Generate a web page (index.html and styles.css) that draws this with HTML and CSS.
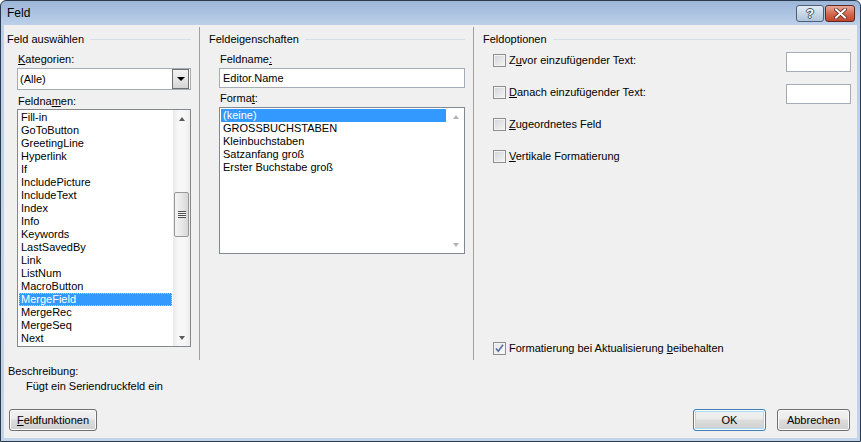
FILE: index.html
```html
<!DOCTYPE html>
<html lang="de">

<head>
    <meta charset="UTF-8">
    <title>Feld</title>
    <link rel="stylesheet" href="styles.css">
</head>

<body>
    <div class="window">
        <div class="titlebar">
            <span class="title">Feld</span>
            <div class="caption-buttons">
                <div class="cap cap-help">?</div>
                <div class="cap cap-close">
                    <svg width="13" height="11" viewBox="0 0 13 11">
                        <path d="M2 1.5 L11 9.5 M11 1.5 L2 9.5" stroke="#5b2a20" stroke-width="3.6" stroke-linecap="square" />
                        <path d="M2 1.5 L11 9.5 M11 1.5 L2 9.5" stroke="#fff" stroke-width="2" stroke-linecap="square" />
                    </svg>
                </div>
            </div>
        </div>

        <div class="client">
            <div class="panes">
                <!-- Feld auswählen -->
                <section class="pane pane-select">
                    <div class="group-title">Feld auswählen</div>
                    <div class="pane-body">
                        <span class="label"><u>K</u>ategorien:</span>
                        <div class="combo">
                            <span class="combo-text">(Alle)</span>
                            <span class="combo-btn"><i class="tri-down"></i></span>
                        </div>
                        <span class="label label-gap">Feldna<u>m</u>en:</span>
                        <div class="listbox list-names">
                            <div class="items">
                                <div class="item">Fill-in</div>
                                <div class="item">GoToButton</div>
                                <div class="item">GreetingLine</div>
                                <div class="item">Hyperlink</div>
                                <div class="item">If</div>
                                <div class="item">IncludePicture</div>
                                <div class="item">IncludeText</div>
                                <div class="item">Index</div>
                                <div class="item">Info</div>
                                <div class="item">Keywords</div>
                                <div class="item">LastSavedBy</div>
                                <div class="item">Link</div>
                                <div class="item">ListNum</div>
                                <div class="item">MacroButton</div>
                                <div class="item selected focused">MergeField</div>
                                <div class="item">MergeRec</div>
                                <div class="item">MergeSeq</div>
                                <div class="item">Next</div>
                            </div>
                            <div class="scrollbar">
                                <div class="sb-arrow"><i class="tri-up"></i></div>
                                <div class="sb-track">
                                    <div class="sb-thumb"><i class="grip"></i></div>
                                </div>
                                <div class="sb-arrow"><i class="tri-down small"></i></div>
                            </div>
                        </div>
                    </div>
                </section>

                <!-- Feldeigenschaften -->
                <section class="pane pane-props">
                    <div class="group-title">Feldeigenschaften</div>
                    <div class="pane-body">
                        <span class="label">Feldname<u>:</u></span>
                        <div class="textbox">Editor.Name</div>
                        <span class="label label-format">Forma<u>t</u>:</span>
                        <div class="listbox list-format">
                            <div class="items">
                                <div class="item selected">(keine)</div>
                                <div class="item">GROSSBUCHSTABEN</div>
                                <div class="item">Kleinbuchstaben</div>
                                <div class="item">Satzanfang groß</div>
                                <div class="item">Erster Buchstabe groß</div>
                            </div>
                            <div class="scrollbar disabled">
                                <div class="sb-arrow"><i class="tri-up"></i></div>
                                <div class="sb-track"></div>
                                <div class="sb-arrow"><i class="tri-down small"></i></div>
                            </div>
                        </div>
                    </div>
                </section>

                <!-- Feldoptionen -->
                <section class="pane pane-options">
                    <div class="group-title">Feldoptionen</div>
                    <div class="options">
                        <div class="option">
                            <label class="check-label"><span class="checkbox"></span><span>Z<u>u</u>vor einzufügender Text:</span></label>
                            <div class="option-input"></div>
                        </div>
                        <div class="option">
                            <label class="check-label"><span class="checkbox"></span><span><u>D</u>anach einzufügender Text:</span></label>
                            <div class="option-input"></div>
                        </div>
                        <div class="option">
                            <label class="check-label"><span class="checkbox"></span><span><u>Z</u>ugeordnetes Feld</span></label>
                        </div>
                        <div class="option">
                            <label class="check-label"><span class="checkbox"></span><span><u>V</u>ertikale Formatierung</span></label>
                        </div>
                    </div>
                    <div class="option option-keep">
                        <label class="check-label">
                            <span class="checkbox checked">
                                <svg width="11" height="11" viewBox="0 0 11 11">
                                    <path d="M2 5.5 L4.3 8.2 L9 1.8" fill="none" stroke="#5a6f9c" stroke-width="1.7" />
                                </svg>
                            </span>
                            <span>Formatierung bei Aktualisierung <u>b</u>eibehalten</span>
                        </label>
                    </div>
                </section>
            </div>

            <div class="description">
                <div>Beschreibung:</div>
                <div class="desc-text">Fügt ein Seriendruckfeld ein</div>
            </div>

            <div class="footer">
                <button class="btn btn-codes"><u>F</u>eldfunktionen</button>
                <button class="btn btn-default">OK</button>
                <button class="btn">Abbrechen</button>
            </div>
        </div>
    </div>
</body>

</html>
```

FILE: styles.css
```css
* {
    box-sizing: border-box;
}

body {
    margin: 0;
    font-family: 'Liberation Sans', Arial, sans-serif;
    font-size: 11px;
    color: #000;
    background: #fff;
}

u {
    text-decoration: underline;
    text-underline-offset: 1px;
}

.window {
    width: 861px;
    height: 442px;
    border: 1px solid #2b3a4e;
    border-radius: 6px 6px 0 0;
    background: linear-gradient(#9cb6d7, #bcd0e9 24px, #c2d4ea);
    padding: 0 3px 3px;
    display: flex;
    flex-direction: column;
}

/* title bar */
.titlebar {
    height: 24px;
    flex-shrink: 0;
    display: flex;
    align-items: center;
    justify-content: space-between;
    padding: 0 2px 0 3px;
}

.title {
    font-size: 12px;
}

.caption-buttons {
    display: flex;
    gap: 1px;
}

.cap {
    height: 17px;
    border: 1px solid #4d5e75;
    border-radius: 3px;
    display: flex;
    align-items: center;
    justify-content: center;
}

.cap-help {
    width: 28px;
    background: linear-gradient(#e3ebf5, #c8d6e7 50%, #b1c4dc);
    color: #fff;
    font-weight: bold;
    font-size: 13px;
    text-shadow: 1px 0 #3d4f68, -1px 0 #3d4f68, 0 1px #3d4f68, 0 -1px #3d4f68;
}

.cap-close {
    width: 30px;
    border-color: #5a2a22;
    background: linear-gradient(#e9a99a, #d56b52 50%, #c3442c);
}

/* client area */
.client {
    flex: 1;
    background: #f0f0f0;
    display: flex;
    flex-direction: column;
}

.panes {
    display: flex;
    height: 333px;
    margin-top: 2px;
}

.pane-select {
    width: 195px;
    padding: 0 8px 0 3px;
}

.pane-props {
    width: 274px;
    border-left: 1px solid #a0a0a0;
    padding: 0 8px 0 9px;
}

.pane-options {
    flex: 1;
    border-left: 1px solid #a0a0a0;
    padding: 0 6px 0 9px;
    display: flex;
    flex-direction: column;
}

.group-title {
    display: flex;
    align-items: center;
    gap: 6px;
    padding-top: 5px;
    line-height: 15px;
}

.group-title::after {
    content: "";
    flex: 1;
    height: 1px;
    background: #d5dfe5;
}

.pane-body {
    padding-left: 10px;
    display: flex;
    flex-direction: column;
}

.label {
    display: block;
    line-height: 15px;
    margin-top: 5px;
    padding-left: 1px;
}

.label-gap {
    margin-top: 4px;
}

.label-format {
    margin-top: 3px;
}

/* combo box */
.combo {
    height: 22px;
    margin-top: 1px;
    border: 1px solid #a5acb5;
    background: #fff;
    display: flex;
    align-items: center;
    padding: 0 1px 0 2px;
}

.combo-text {
    flex: 1;
}

.combo-btn {
    width: 17px;
    height: 20px;
    border: 1px solid #707070;
    background: linear-gradient(#f2f2f2, #e6e6e6 50%, #d4d4d4);
    display: flex;
    align-items: center;
    justify-content: center;
}

.tri-down {
    width: 0;
    height: 0;
    border-left: 4px solid transparent;
    border-right: 4px solid transparent;
    border-top: 4px solid #000;
}

.tri-down.small {
    border-left-width: 3.5px;
    border-right-width: 3.5px;
    border-top: 4px solid #5a5a5a;
}

.tri-up {
    width: 0;
    height: 0;
    border-left: 3.5px solid transparent;
    border-right: 3.5px solid transparent;
    border-bottom: 4px solid #5a5a5a;
}

/* text boxes */
.textbox {
    height: 20px;
    margin-top: 1px;
    border: 1px solid #a5acb5;
    background: #fff;
    line-height: 18px;
    padding-left: 3px;
}

/* list boxes */
.listbox {
    border: 1px solid #828790;
    background: #fff;
    display: flex;
}

.list-names {
    height: 238px;
}

.list-format {
    height: 147px;
    margin-top: 1px;
}

.items {
    flex: 1;
    padding: 1px;
}

.item {
    height: 13px;
    line-height: 13px;
    padding-left: 2px;
    white-space: nowrap;
}

.item.selected {
    background: #3399ff;
    color: #fff;
}

.item.focused {
    outline: 1px dotted #f0c890;
    outline-offset: -1px;
}

/* scroll bars */
.scrollbar {
    width: 17px;
    display: flex;
    flex-direction: column;
    background: linear-gradient(90deg, #e9e9e9, #f7f7f7 30%, #f7f7f7 70%, #ececec);
}

.sb-arrow {
    height: 17px;
    display: flex;
    align-items: center;
    justify-content: center;
}

.sb-track {
    flex: 1;
}

.sb-thumb {
    margin: 65px 1px 0 1px;
    height: 45px;
    border: 1px solid #989898;
    border-radius: 2px;
    background: linear-gradient(90deg, #f4f4f4, #e8e8e8 50%, #d6d6d6);
    display: flex;
    align-items: center;
    justify-content: center;
}

.grip {
    width: 8px;
    height: 7px;
    background: repeating-linear-gradient(#4d4d4d 0 1px, #f4f4f4 1px 2px);
}

.scrollbar.disabled {
    background: #fff;
}

.scrollbar.disabled .tri-up {
    border-bottom-color: #b4b4b4;
}

.scrollbar.disabled .tri-down {
    border-top-color: #b4b4b4;
}

/* options */
.options {
    margin-top: 3px;
    padding-left: 10px;
    display: flex;
    flex-direction: column;
    gap: 10px;
}

.option {
    display: flex;
    height: 22px;
}

.check-label {
    display: flex;
    align-items: center;
    gap: 3px;
    height: 20px;
}

.checkbox {
    width: 13px;
    height: 13px;
    border: 1px solid #8e8f8f;
    background: linear-gradient(135deg, #d2d4d8, #f6f6f6);
    box-shadow: inset 0 0 0 1px #f2f2f2;
    display: flex;
    align-items: center;
    justify-content: center;
}

.checkbox.checked {
    background: linear-gradient(135deg, #e4e6ea, #fbfbfb);
}

.option-input {
    margin-left: auto;
    width: 65px;
    height: 20px;
    margin-top: 2px;
    border: 1px solid #a5acb5;
    background: #fff;
}

.option-keep {
    margin-top: auto;
    margin-bottom: 2px;
    padding-left: 10px;
    height: 20px;
}

/* description + buttons */
.description {
    padding: 4px 0 0 4px;
    line-height: 15px;
}

.desc-text {
    padding-left: 18px;
}

.footer {
    margin-top: auto;
    display: flex;
    gap: 11px;
    padding: 0 7px 7px 5px;
}

.btn {
    height: 22px;
    width: 73px;
    padding: 0;
    font: inherit;
    color: #000;
    border: 1px solid #707070;
    border-radius: 3px;
    background: linear-gradient(#f2f2f2, #ebebeb 45%, #dddddd 50%, #cfcfcf);
    box-shadow: inset 0 0 0 1px #fbfbfb;
}

.btn-codes {
    width: 88px;
    margin-right: auto;
}

.btn-default {
    border-color: #3c7fb1;
    box-shadow: inset 0 0 0 1px #fff, inset 0 0 0 2px #a8dcf5;
}
```
